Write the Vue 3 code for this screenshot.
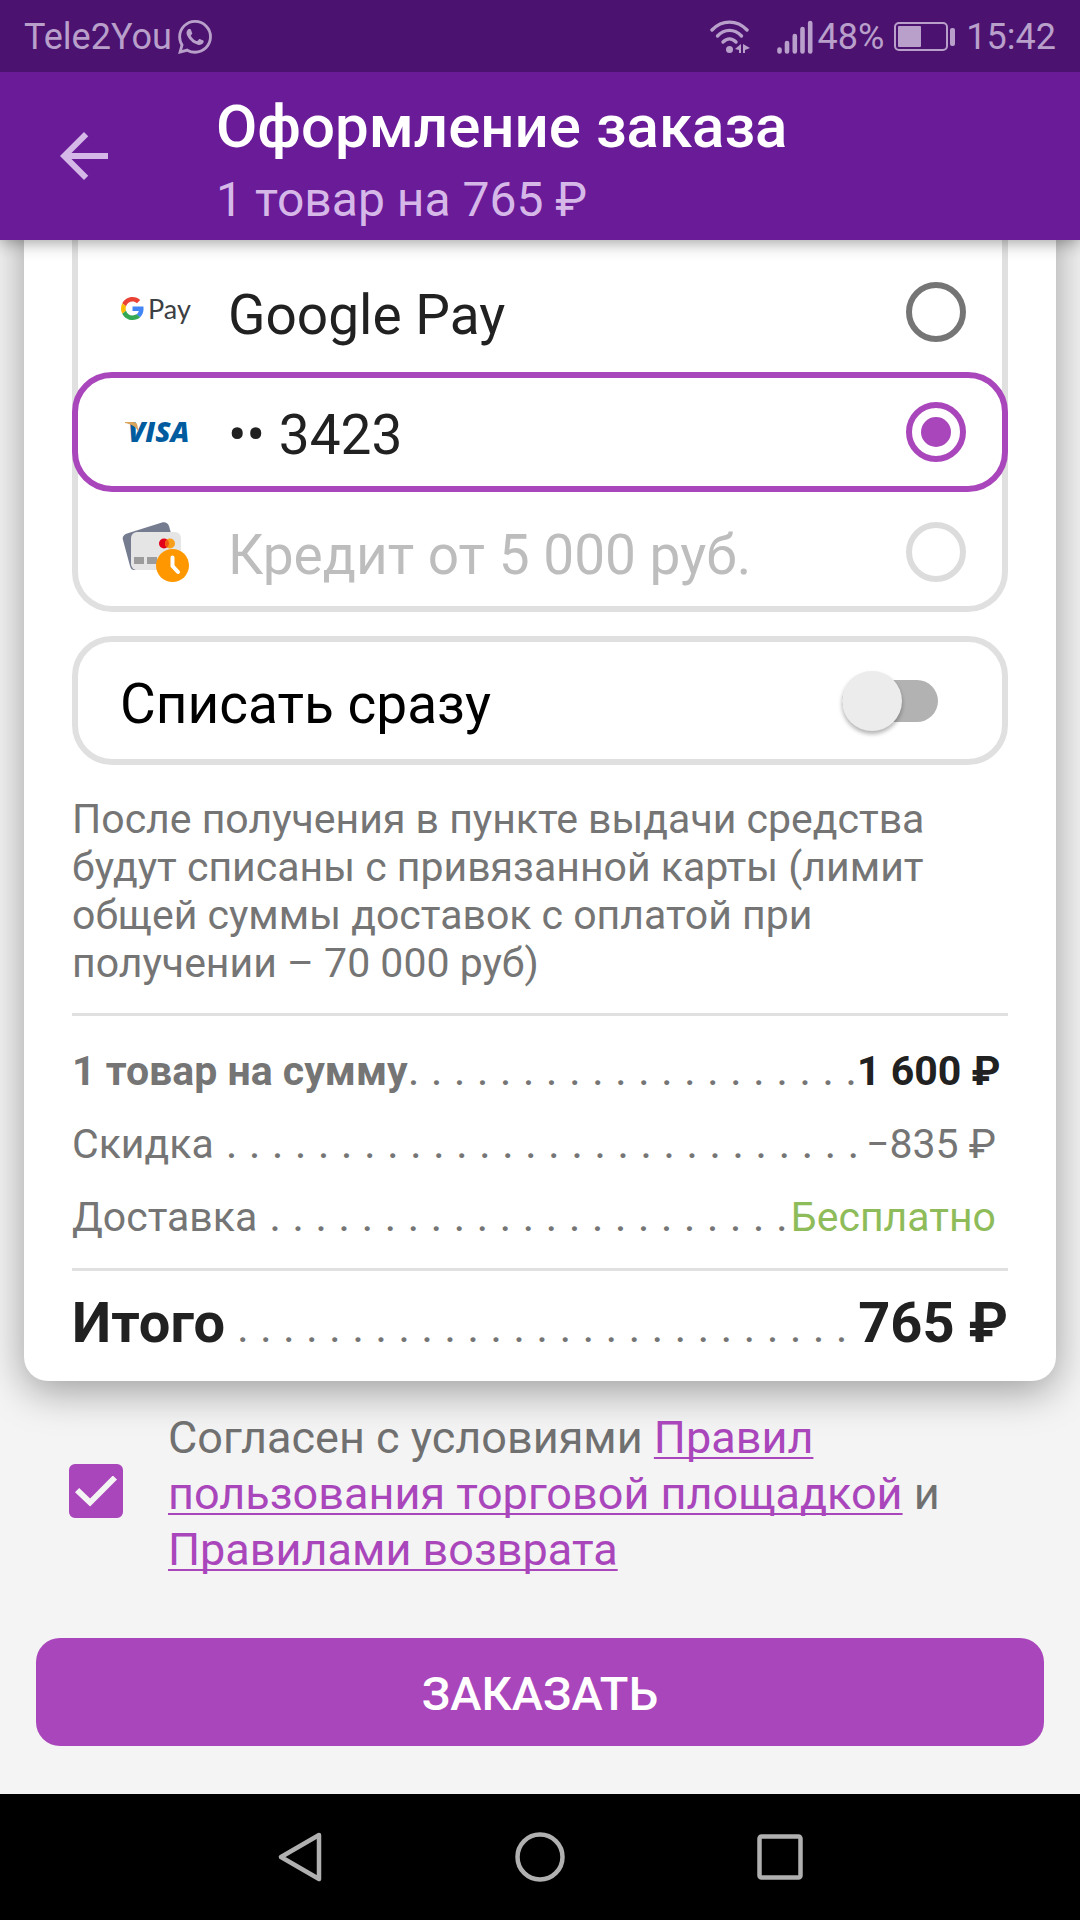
<template>
  <div class="screen">
    <div class="status-bar">
      <span class="carrier">Tele2You</span>
      <svg class="whatsapp" viewBox="0 0 24 24" aria-hidden="true">
        <path fill="currentColor" d="M17.472 14.382c-.297-.149-1.758-.867-2.03-.967-.273-.099-.471-.148-.67.15-.197.297-.767.966-.94 1.164-.173.199-.347.223-.644.075-.297-.15-1.255-.463-2.39-1.475-.883-.788-1.48-1.761-1.653-2.059-.173-.297-.018-.458.13-.606.134-.133.298-.347.446-.52.149-.174.198-.298.298-.497.099-.198.05-.371-.025-.52-.075-.149-.669-1.612-.916-2.207-.242-.579-.487-.5-.669-.51-.173-.008-.371-.01-.57-.01-.198 0-.52.074-.792.372-.272.297-1.04 1.016-1.04 2.479 0 1.462 1.065 2.875 1.213 3.074.149.198 2.096 3.2 5.077 4.487.709.306 1.262.489 1.694.625.712.227 1.36.195 1.871.118.571-.085 1.758-.719 2.006-1.413.248-.694.248-1.289.173-1.413-.074-.124-.272-.198-.57-.347m-5.421 7.403h-.004a9.87 9.87 0 01-5.031-1.378l-.361-.214-3.741.982.998-3.648-.235-.374a9.86 9.86 0 01-1.51-5.26c.001-5.45 4.436-9.884 9.888-9.884 2.64 0 5.122 1.03 6.988 2.898a9.825 9.825 0 012.893 6.994c-.003 5.45-4.437 9.884-9.885 9.884m8.413-18.297A11.815 11.815 0 0012.05 0C5.495 0 .16 5.335.157 11.892c0 2.096.547 4.142 1.588 5.945L.057 24l6.305-1.654a11.882 11.882 0 005.683 1.448h.005c6.554 0 11.89-5.335 11.893-11.893a11.821 11.821 0 00-3.48-8.413Z" />
      </svg>
      <div class="status-right">
        <svg class="wifi" viewBox="0 0 40 34" aria-hidden="true">
          <g fill="none" stroke="currentColor" stroke-width="3.4" stroke-linecap="round">
            <path d="M2 10C12-.5 27-.5 37 10" />
            <path d="M7.5 16C14.500 8.500 24.500 8.500 31.500 16" />
            <path d="M13 22C17 18 22 18 26 22" />
          </g>
          <circle cx="19.500" cy="29.500" r="3.500" fill="currentColor" />
          <path fill="currentColor" d="M31 24v9h-2v-3l-4-1zM33 24v9h2v-3l5-2z" />
        </svg>
        <svg class="signal" viewBox="0 0 36 34" aria-hidden="true">
          <g stroke="currentColor" stroke-width="4.600" stroke-linecap="round">
            <path d="M2.500 29.500v2M10 23v8.500M17.800 16v15.500M25.500 9v22.500M33.200 3v28.500" />
          </g>
        </svg>
        <span>48%</span>
        <svg class="battery" viewBox="0 0 62 30" aria-hidden="true">
          <rect x="1" y="1" width="52" height="27" rx="4" fill="none" stroke="currentColor" stroke-width="2" />
          <rect x="4" y="4" width="23" height="21" rx="1" fill="currentColor" />
          <rect x="56" y="6" width="5" height="18" rx="2" fill="currentColor" />
        </svg>
        <span>15:42</span>
      </div>
    </div>

    <header class="app-bar">
      <button class="back" type="button" aria-label="Назад">
        <svg viewBox="0 0 24 24">
          <path fill="currentColor" d="M20 11H7.830l5.590-5.590L12 4l-8 8 8 8 1.410-1.410L7.830 13H20z" />
        </svg>
      </button>
      <div class="heading">
        <h1>Оформление заказа</h1>
        <p>1 товар на 765 ₽</p>
      </div>
    </header>

    <main>
      <section class="card">
        <div class="methods" role="radiogroup" aria-label="Способ оплаты">
          <label
            v-for="item in methods"
            :key="item.id"
            class="method"
            :class="{ selected: item.id === method, disabled: item.disabled }"
          >
            <svg v-if="item.id === 'gpay'" class="method-icon" viewBox="0 0 72 72" aria-hidden="true">
              <g transform="translate(1 21) scale(.48)">
                <path fill="#EA4335" d="M24 9.500c3.540 0 6.710 1.220 9.210 3.600l6.850-6.850C35.900 2.380 30.470 0 24 0 14.620 0 6.510 5.380 2.560 13.220l7.980 6.190C12.430 13.720 17.740 9.500 24 9.500z" />
                <path fill="#4285F4" d="M46.980 24.550c0-1.570-.15-3.090-.38-4.550H24v9.020h12.940c-.58 2.960-2.260 5.480-4.780 7.180l7.730 6c4.510-4.180 7.090-10.360 7.090-17.650z" />
                <path fill="#FBBC05" d="M10.530 28.590c-.48-1.450-.76-2.990-.76-4.590s.27-3.140.76-4.590l-7.980-6.190C.92 16.460 0 20.120 0 24c0 3.880.92 7.540 2.560 10.780l7.970-6.190z" />
                <path fill="#34A853" d="M24 48c6.480 0 11.930-2.130 15.890-5.810l-7.730-6c-2.150 1.450-4.920 2.300-8.160 2.300-6.260 0-11.570-4.220-13.470-9.910l-7.980 6.190C6.510 42.620 14.620 48 24 48z" />
              </g>
              <text class="pay-text" x="28" y="43">Pay</text>
            </svg>
            <svg v-else-if="item.id === 'visa'" class="method-icon" viewBox="0 0 72 72" aria-hidden="true">
              <text class="visa-text" x="8" y="46">VISA</text>
              <path fill="#d9a45b" d="M5 26h8c3 0 4 1 4.500 4l1 6c-2-5-7-8-13.500-9z" />
            </svg>
            <svg v-else class="method-icon" viewBox="0 0 72 72" aria-hidden="true">
              <path fill="#757c8f" d="M7 17.500 42 6.500c3-1 6 .5 7 3.500l9 32-44 12c-2 0-3-1-4-4L3 24c-1-3 1-5.600 4-6.500z" />
              <rect x="11" y="16" width="50" height="38" rx="6" fill="#e5e5e5" />
              <rect x="14" y="41" width="10" height="7" fill="#9c9c9c" />
              <rect x="27" y="41" width="10" height="7" fill="#9c9c9c" />
              <circle cx="44" cy="27.500" r="5" fill="#e3001b" />
              <circle cx="50" cy="27.500" r="5" fill="#f79e1b" />
              <path fill="#f05a10" d="M47 23.500a5 5 0 0 1 0 8 5 5 0 0 1 0-8z" />
              <circle cx="52.500" cy="49.500" r="16.500" fill="#ff9800" />
              <path d="M52.500 41.500V50l5.500 6" fill="none" stroke="#fff" stroke-width="4" stroke-linecap="round" />
            </svg>
            <span class="method-name">{{ item.name }}</span>
            <input v-model="method" type="radio" name="method" :value="item.id" :disabled="item.disabled">
          </label>
        </div>

        <label class="charge-now">
          <span class="charge-text">Списать сразу</span>
          <input v-model="chargeNow" class="switch" type="checkbox" role="switch">
        </label>

        <p class="note">
          После получения в пункте выдачи средства будут списаны с привязанной карты (лимит общей суммы доставок с оплатой при получении – 70 000 руб)
        </p>

        <dl class="summary">
          <div v-for="row in rows" :key="row.label" class="row" :class="row.kind">
            <dt>{{ row.label }}<span class="leader" aria-hidden="true">{{ leader(row.dots) }}</span></dt>
            <dd>{{ row.value }}</dd>
          </div>
        </dl>

        <dl class="row total">
          <dt>Итого<span class="leader" aria-hidden="true">{{ leader(27) }}</span></dt>
          <dd>765 ₽</dd>
        </dl>
      </section>

      <div class="agreement">
        <input id="agree" v-model="agreed" class="check" type="checkbox">
        <label for="agree">
          Согласен с условиями <a href="#rules">Правил пользования торговой площадкой</a> и <a href="#returns">Правилами возврата</a>
        </label>
      </div>

      <button class="order" type="button">ЗАКАЗАТЬ</button>
    </main>

    <nav class="nav-bar">
      <button type="button" aria-label="Назад">
        <svg viewBox="0 0 52 52"><path d="M45 4 7 26l38 22z" /></svg>
      </button>
      <button type="button" aria-label="Домой">
        <svg viewBox="0 0 52 52"><circle cx="26" cy="26" r="22.500" /></svg>
      </button>
      <button type="button" aria-label="Недавние">
        <svg viewBox="0 0 52 52"><rect x="5.500" y="5.500" width="41" height="41" rx="2" /></svg>
      </button>
    </nav>
  </div>
</template>

<script setup>
import { ref } from 'vue'

const methods = [
  { id: 'gpay', name: 'Google Pay' },
  { id: 'visa', name: '•• 3423' },
  { id: 'credit', name: 'Кредит от 5 000 руб.', disabled: true }
]

const rows = [
  { label: '1 товар на сумму', value: '1 600 ₽', dots: 20, kind: 'goods' },
  { label: 'Скидка', value: '−835 ₽', dots: 28, kind: 'discount' },
  { label: 'Доставка', value: 'Бесплатно', dots: 23, kind: 'delivery' }
]

const method = ref('visa')
const chargeNow = ref(false)
const agreed = ref(true)

const leader = (count) => Array(count).fill('.').join(' ')
</script>

<style>
body {
  margin: 0;
  background: #f4f4f4;
}
</style>

<style scoped>
* {
  box-sizing: border-box;
}

.screen {
  display: flex;
  flex-direction: column;
  min-height: 100vh;
  font-family: Roboto, "Noto Sans", sans-serif;
  background: #f4f4f4;
}

h1,
p,
dl,
dd {
  margin: 0;
}

button {
  border: 0;
  padding: 0;
  background: none;
  font-family: inherit;
}

input {
  appearance: none;
  flex: none;
  margin: 0;
}

/* status bar */
.status-bar {
  position: relative;
  z-index: 3;
  display: flex;
  align-items: center;
  height: 72px;
  padding: 2px 24px 0;
  background: #4b136f;
  color: #b9a0cb;
  font-size: 36px;
}

.whatsapp {
  width: 34px;
  height: 34px;
  margin-left: 6px;
}

.status-right {
  display: flex;
  align-items: center;
  margin-left: auto;
}

.wifi {
  width: 40px;
  height: 34px;
  margin-right: 27px;
}

.signal {
  width: 36px;
  height: 34px;
  margin-right: 5px;
}

.battery {
  width: 62px;
  height: 30px;
  margin: 0 10px;
}

/* header */
.app-bar {
  position: relative;
  z-index: 2;
  display: flex;
  align-items: center;
  min-height: 168px;
  padding: 0 48px;
  background: #6a1b98;
  box-shadow: 0 2px 16px rgba(0, 0, 0, 0.4);
}

.back {
  display: flex;
  color: #d6b8e8;
}

.back svg {
  width: 72px;
  height: 72px;
}

.heading {
  margin-left: 96px;
  padding-top: 8px;
}

.heading h1 {
  margin-bottom: 10px;
  color: #fff;
  font-size: 60px;
  font-weight: 500;
  line-height: 70px;
}

.heading p {
  color: #d6b8e8;
  font-size: 48px;
  line-height: 56px;
}

/* card */
.card {
  margin: 0 24px;
  padding: 0 48px 25px;
  border-radius: 0 0 24px 24px;
  background: #fff;
  box-shadow: 0 10px 40px rgba(0, 0, 0, 0.36);
}

/* the list is scrolled under the header */
.methods {
  margin-top: -40px;
  padding-top: 52px;
  border-radius: 40px;
  box-shadow: inset 0 0 0 6px #e0e0e0;
}

.method {
  display: flex;
  align-items: center;
  gap: 36px;
  height: 120px;
  padding: 0 36px 0 42px;
  border: 6px solid transparent;
  border-radius: 40px;
  color: #212121;
}

.method.selected {
  border-color: #aa46bb;
  background: #fff;
}

.method.disabled {
  color: #bdbdbd;
}

.method-icon {
  flex: none;
  width: 72px;
  height: 72px;
}

.pay-text {
  fill: #3c4043;
  font-family: Lato, sans-serif;
  font-size: 27px;
}

.visa-text {
  fill: #005b9f;
  font-family: "Open Sans", sans-serif;
  font-size: 28px;
  font-style: italic;
  font-weight: 800;
}

.method-name {
  flex: 1;
  padding-top: 6px;
  font-size: 55px;
  line-height: 66px;
}

.method input {
  display: grid;
  place-items: center;
  width: 60px;
  height: 60px;
  border: 6px solid #757575;
  border-radius: 50%;
}

.method input:checked {
  border-color: #aa46bb;
}

.method input:checked::before {
  content: "";
  width: 30px;
  height: 30px;
  border-radius: 50%;
  background: #aa46bb;
}

.method input:disabled {
  border-color: #dcdcdc;
}

.charge-now {
  display: flex;
  align-items: center;
  justify-content: space-between;
  margin-top: 24px;
  padding: 23px 64px 22px 42px;
  border: 6px solid #e0e0e0;
  border-radius: 40px;
}

.charge-text {
  padding-top: 6px;
  color: #000;
  font-size: 55px;
  line-height: 66px;
}

.switch {
  display: flex;
  align-items: center;
  width: 96px;
  height: 42px;
  border-radius: 21px;
  background: #b2b2b2;
}

.switch::before {
  content: "";
  width: 60px;
  height: 60px;
  flex: none;
  border-radius: 50%;
  background: #ececec;
  box-shadow: 0 3px 4px rgba(0, 0, 0, 0.3);
}

.switch:checked {
  justify-content: flex-end;
}

.note {
  padding: 30px 0 26px;
  border-bottom: 3px solid #e0e0e0;
  color: #757575;
  font-size: 41px;
  line-height: 48px;
}

/* totals */
.summary {
  display: flex;
  flex-direction: column;
  gap: 25px;
  padding: 31px 12px 27px 0;
  border-bottom: 3px solid #e0e0e0;
}

.row {
  display: flex;
  align-items: baseline;
  justify-content: space-between;
  color: #757575;
  font-size: 41px;
  line-height: 48px;
  white-space: nowrap;
}

.leader {
  margin-left: 12px;
  color: #757575;
  font-size: 45px;
  font-weight: 400;
  line-height: 40px;
}

.goods {
  font-weight: 700;
}

.goods .leader {
  margin-left: 0;
}

.goods dd {
  color: #212121;
}

.delivery dd {
  color: #8fbc5a;
}

.total {
  padding-top: 19px;
  color: #212121;
  font-size: 56px;
  font-weight: 700;
  line-height: 66px;
}

/* agreement */
.agreement {
  display: flex;
  align-items: flex-start;
  gap: 45px;
  padding: 29px 69px 0;
  color: #707070;
  font-size: 45px;
  line-height: 56px;
}

.agreement a {
  color: #aa46bb;
  text-decoration-thickness: 2px;
  text-decoration-skip-ink: none;
  text-underline-offset: 4px;
}

.check {
  width: 54px;
  height: 54px;
  margin-top: 54px;
  border: 3px solid #aa46bb;
  border-radius: 6px;
}

.check:checked {
  display: grid;
  place-items: center;
  background: #aa46bb;
}

.check:checked::before {
  content: "";
  width: 42px;
  height: 31px;
  background: #f4f4f4;
  clip-path: polygon(0 54%, 10% 40%, 36% 74%, 90% 0, 100% 13%, 36% 100%);
}

.order {
  display: block;
  width: calc(100% - 72px);
  height: 108px;
  margin: 60px 36px 48px;
  padding-top: 2px;
  border-radius: 24px;
  background: #aa46bb;
  color: #fff;
  font-size: 47px;
  font-weight: 500;
}

/* system navigation */
.nav-bar {
  display: flex;
  align-items: center;
  justify-content: center;
  gap: 188px;
  height: 126px;
  margin-top: auto;
  background: #000;
}

.nav-bar button {
  display: flex;
}

.nav-bar svg {
  width: 52px;
  height: 52px;
  fill: none;
  stroke: #b0b0b0;
  stroke-width: 4.5;
  stroke-linejoin: round;
}
</style>
